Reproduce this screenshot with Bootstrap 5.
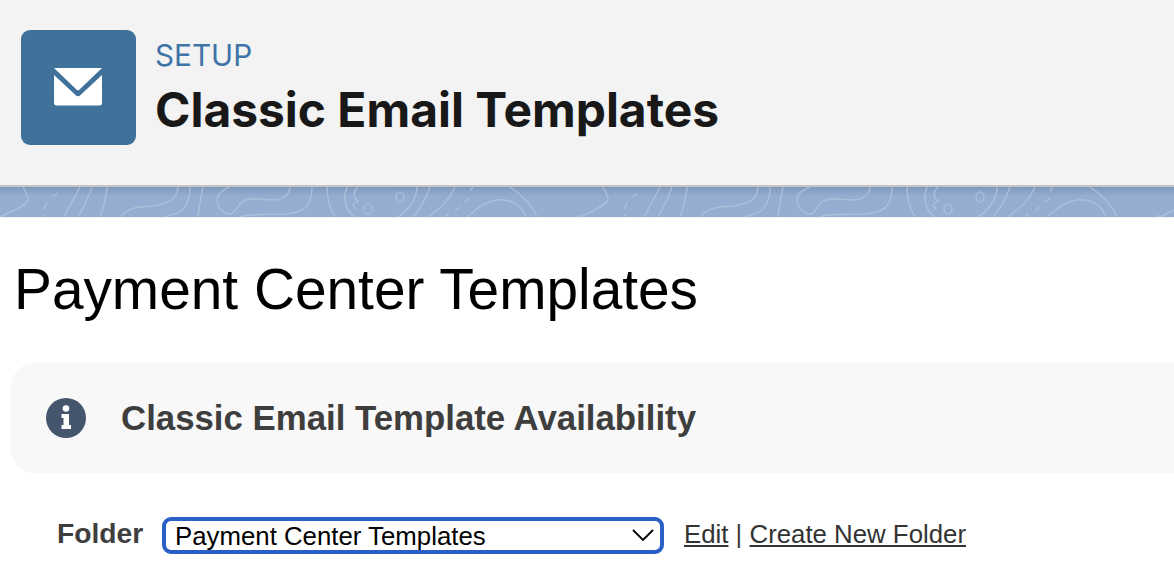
<!DOCTYPE html>
<html lang="en">
<head>
    <meta charset="UTF-8">
    <meta name="viewport" content="width=device-width, initial-scale=1.0">
    <title>Classic Email Templates</title>
    <link href="https://cdn.jsdelivr.net/npm/bootstrap@5.3.2/dist/css/bootstrap.min.css" rel="stylesheet">
    <style>
        html, body {
            height: 576px;
            overflow: hidden;
        }
        body {
            background: #fff;
            font-family: "Liberation Sans", Arial, sans-serif;
        }
        .setup-head {
            height: 187px;
            padding: 30px 0 0 21px;
            background: #f3f3f3;
            border-bottom: 2px solid #c4c4c4;
            gap: 20px;
        }
        .setup-tile {
            width: 115px;
            height: 115px;
            border-radius: 9px;
            background: #40719b;
        }
        .setup-tile svg {
            margin: -1px 1px 0 0;
        }
        .setup-text {
            margin-left: -1px;
        }
        .setup-eyebrow {
            margin-top: 7px;
            font-family: Inter, sans-serif;
            font-size: 29.7px;
            line-height: 36px;
            color: #3e74a8;
        }
        .setup-title {
            margin: 4px 0 0;
            font-family: Inter, sans-serif;
            font-size: 47.9px;
            font-weight: 700;
            line-height: 66px;
            color: #181818;
        }
        .topo-band {
            height: 31px;
            background: linear-gradient(#7f98be 0, #94add0 9px, #96aed1 100%);
            border-bottom: 1px solid #eef2f7;
        }
        .topo-band svg {
            display: block;
        }
        .page-title {
            margin: 41px 0 0 14px;
            font-size: 56.8px;
            font-weight: 400;
            line-height: 62px;
            color: #000;
        }
        .info-box {
            height: 110px;
            margin: 42px -30px 0 11px;
            padding-left: 35px;
            background: #f8f8f8;
            border-radius: 24px;
            gap: 35px;
        }
        .info-text {
            font-size: 34.8px;
            font-weight: 700;
            color: #3e3e3e;
        }
        .folder-row {
            margin: 43px 0 0 57px;
            height: 38px;
        }
        .folder-label {
            width: 105px;
            margin-top: -4px;
            font-size: 28.2px;
            font-weight: 700;
            color: #3e3e3e;
        }
        .folder-select.form-select {
            width: 502px;
            height: 37px;
            padding: 0 40px 0 9px;
            font-family: "Liberation Sans", Arial, sans-serif;
            font-size: 25.8px;
            line-height: 30px;
            color: #000;
            border: 4px solid #2a5fc7;
            border-radius: 9px;
            box-shadow: none;
            background-image: url("data:image/svg+xml,%3csvg xmlns='http://www.w3.org/2000/svg' viewBox='0 0 22 12'%3e%3cpath fill='none' stroke='%23000' stroke-width='1.800' d='M1 1l10 10 10-10'/%3e%3c/svg%3e");
            background-position: right 6px center;
            background-size: 22px 12px;
        }
        .folder-links {
            margin: -2px 0 0 20px;
            font-size: 25.8px;
            color: #3e3e3e;
        }
        .folder-links a {
            color: #333;
        }
    </style>
</head>
<body>
    <header class="setup-head d-flex">
        <div class="setup-tile d-flex align-items-center justify-content-center flex-shrink-0">
            <svg width="48" height="38" viewBox="0 0 48 38">
                <path fill="#fff" d="M0 0H48L25.500 21.500a2 2 0 0 1-3 0Z"/>
                <path fill="#fff" d="M0 7V35a2.500 2.500 0 0 0 2.500 2.500h43A2.500 2.500 0 0 0 48 35V7L26.500 27a3.500 3.500 0 0 1-5 0Z"/>
            </svg>
        </div>
        <div class="setup-text">
            <div class="setup-eyebrow">SETUP</div>
            <h1 class="setup-title">Classic Email Templates</h1>
        </div>
    </header>

    <div class="topo-band">
        <svg width="1174" height="30">
            <defs>
                <pattern id="topo" width="580" height="30" patternUnits="userSpaceOnUse">
                    <g fill="none" stroke="#b4c6df" stroke-opacity=".7" stroke-width="1.500">
                        <path d="M23 0C26 5 28 9 28 13C26 19 12 24 0 30"/>
                        <path d="M58 6L52 10M47 15L44 22M45 27V30"/>
                        <path d="M80 0L64 30M92 0C88 11 84 20 78 30M107 0C106 10 104 20 100 30"/>
                        <path d="M178 0C178 14 165 19 140 20C130 21 124 25 120 30"/>
                        <path d="M190 0C190 16 183 27 170 28L165 30M203 0C201 10 199 20 198 30"/>
                        <path d="M230 0C222 3 217 8 217 13C217 21 224 27 230 27C238 26 236 14 250 12C262 11 272 15 280 12C287 9 290 5 290 0"/>
                        <path d="M312 0C312 18 305 26 285 27C270 28 250 26 240 30"/>
                        <path d="M327 0C327 12 330 22 335 30"/>
                        <path d="M347 0C343 10 344 22 355 30M358 0C352 6 354 12 358 14C354 16 351 17 356 22"/>
                        <ellipse cx="368" cy="22" rx="4" ry="5"/>
                        <ellipse cx="400" cy="10" rx="4" ry="5"/>
                        <path d="M417 0C417 12 408 24 398 30M430 0C426 12 420 22 413 30M455 0C450 12 442 20 428 30"/>
                        <path d="M473 0L470 4M470 11L465 15M460 20L455 24M448 27L445 30"/>
                        <path d="M467 30C477 22 485 14 497 13C510 12 520 17 524 26L526 30"/>
                        <path d="M510 0C522 8 532 18 537 30"/>
                        <path d="M577 30L580 28.500"/>
                    </g>
                </pattern>
            </defs>
            <rect width="1174" height="30" fill="url(#topo)"/>
        </svg>
    </div>

    <main>
        <div class="page-title">Payment Center Templates</div>

        <section class="info-box d-flex align-items-center">
            <svg class="flex-shrink-0" width="40" height="40" viewBox="0 0 40 40">
                <circle cx="20" cy="20" r="20" fill="#45566c"/>
                <circle cx="20" cy="10.500" r="3.300" fill="#fff"/>
                <path fill="#fff" d="M15.500 16H23V27H25V31H15.500V27H17.500V20H15.500Z"/>
            </svg>
            <div class="info-text">Classic Email Template Availability</div>
        </section>

        <form class="folder-row d-flex align-items-center">
            <label class="folder-label" for="folderSelect">Folder</label>
            <select class="folder-select form-select" id="folderSelect">
                <option>Payment Center Templates</option>
            </select>
            <div class="folder-links">
                <a href="#">Edit</a> | <a href="#">Create New Folder</a>
            </div>
        </form>
    </main>

    <script src="https://cdn.jsdelivr.net/npm/bootstrap@5.3.2/dist/js/bootstrap.bundle.min.js"></script>
</body>
</html>
